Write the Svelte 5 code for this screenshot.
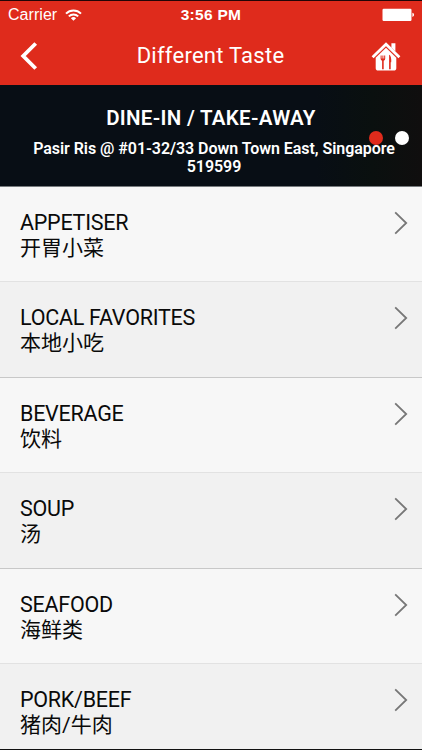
<script>
    const shop = {
        name: "Different Taste",
        service: "DINE-IN / TAKE-AWAY",
        address: "Pasir Ris @ #01-32/33 Down Town East, Singapore 519599",
    };

    const categories = [
        { name: "APPETISER", local: "开胃小菜" },
        { name: "LOCAL FAVORITES", local: "本地小吃" },
        { name: "BEVERAGE", local: "饮料" },
        { name: "SOUP", local: "汤" },
        { name: "SEAFOOD", local: "海鲜类" },
        { name: "PORK/BEEF", local: "猪肉/牛肉" },
    ];

    let page = $state(0);
</script>

<div class="screen">
    <header>
        <div class="status">
            <span class="carrier">
                <span>Carrier</span>
                <svg width="17" height="12" viewBox="0 0 17 12">
                    <g fill="none" stroke="#fff" stroke-width="2">
                        <path d="M1 4.6a10.6 10.6 0 0 1 15 0" />
                        <path d="M3.8 7.4a6.7 6.7 0 0 1 9.4 0" />
                    </g>
                    <path d="M8.5 11.8 5.9 9.2a3.7 3.7 0 0 1 5.2 0z" fill="#fff" />
                </svg>
            </span>
            <span class="time">3:56 PM</span>
            <svg class="battery" width="33" height="14" viewBox="0 0 33 14">
                <rect x="0.5" y="0.7" width="29" height="12.3" rx="1.2" fill="#fff" />
                <path d="M30.4 4.8c2.2.5 2.2 3.6 0 4.1z" fill="#fff" />
            </svg>
        </div>
        <nav>
            <button aria-label="Back">
                <svg width="18" height="28" viewBox="0 0 18 28">
                    <path d="M15.7 1.5 3.2 14l12.5 12.5" fill="none" stroke="#fff" stroke-width="3.8" />
                </svg>
            </button>
            <h1>{shop.name}</h1>
            <button aria-label="Home">
                <svg width="30" height="30" viewBox="0 0 30 30">
                    <path d="M20.4 6.5V2.2h4v8.2z" fill="#fff" />
                    <path d="M1.6 16.2 15 3.2l13.4 13" fill="none" stroke="#fff" stroke-width="2.8" />
                    <path d="M15 6.8 25.3 16.8V27q0 2.6-2.6 2.6H7.3Q4.7 29.6 4.7 27V16.8z" fill="#fff" />
                    <path
                        d="M9.6 14.5h1v3h.8v-3h1v3h.8v-3h1v3.3q0 1.5-1.5 1.9v8.5h-1.6v-8.5q-1.5-.4-1.5-1.9zM18.4 13.7q2.2 1.6 1.8 7.5h-.5v7h-1.6V14z"
                        fill="#df2b1c"
                    />
                </svg>
            </button>
        </nav>
    </header>

    <section class="banner">
        <h2>{shop.service}</h2>
        <p>{shop.address}</p>
        <div class="dots">
            {#each [0, 1] as dot}
                <button
                    class="dot"
                    class:active={page === dot}
                    aria-label="Page {dot + 1}"
                    onclick={() => (page = dot)}
                ></button>
            {/each}
        </div>
    </section>

    <ul>
        {#each categories as category}
            <li>
                <div>
                    <h3>{category.name}</h3>
                    <p>{category.local}</p>
                </div>
                <svg width="14" height="24" viewBox="0 0 14 24">
                    <path d="M1.2 1.3 12.2 12 1.2 22.7" fill="none" stroke="#777" stroke-width="1.8" />
                </svg>
            </li>
        {/each}
    </ul>
</div>

<style>
    :global(body) {
        margin: 0;
    }

    .screen {
        box-sizing: border-box;
        width: 422px;
        height: 750px;
        overflow: hidden;
        border-top: 1px solid #210506;
        border-bottom: 1px solid #111;
        background-color: #f1f1f1;
        font-family: Roboto, "Noto Sans CJK SC", sans-serif;
        display: flex;
        flex-direction: column;
    }

    h1,
    h2,
    h3,
    p,
    ul {
        margin: 0;
        padding: 0;
        font-weight: 400;
    }

    svg {
        display: block;
    }

    button {
        padding: 0;
        border: none;
        background: none;
    }

    header {
        flex: none;
        height: 84px;
        background-color: #df2b1c;
        color: #fff;
    }

    .status {
        height: 28px;
        padding: 0 8px;
        display: grid;
        grid-template-columns: 1fr auto 1fr;
        align-items: center;
        font-family: "Liberation Sans", Arial, sans-serif;
        font-size: 16px;
    }

    .carrier {
        display: flex;
        align-items: center;
        gap: 8px;
        letter-spacing: 0.05px;
    }

    .time {
        font-weight: 700;
        font-size: 15.5px;
        letter-spacing: 0.3px;
    }

    .battery {
        justify-self: end;
        margin-right: -1px;
    }

    nav {
        height: 54px;
        padding: 0 21px 0 20px;
        display: grid;
        grid-template-columns: 30px 1fr 30px;
        align-items: center;
    }

    h1 {
        font-size: 22px;
        line-height: 26px;
        letter-spacing: 0.25px;
        text-align: center;
    }

    .banner {
        position: relative;
        box-sizing: border-box;
        flex: none;
        height: 101.5px;
        padding: 20px 20px 0;
        border-bottom: 1px solid #777b7e;
        background: linear-gradient(90deg, #080e15 75%, #0a100f 88%, #100e0e);
        color: #fff;
        text-align: center;
    }

    h2 {
        font-size: 20.5px;
        line-height: 26px;
        font-weight: 600;
        letter-spacing: 0.3px;
    }

    .banner p {
        margin-top: 9px;
        padding-left: 6px;
        font-size: 16px;
        line-height: 18px;
        font-weight: 600;
        letter-spacing: -0.05px;
    }

    .dots {
        position: absolute;
        top: 46px;
        right: 13px;
        display: flex;
        gap: 12px;
    }

    .dot {
        width: 14px;
        height: 14px;
        border-radius: 50%;
        background-color: #fff;
    }

    .dot.active {
        background-color: #df2b1c;
    }

    ul {
        list-style: none;
    }

    li {
        box-sizing: border-box;
        height: 95.5px;
        padding: 23px 14.5px 0 20px;
        border-bottom: 1px solid #e2e2e2;
        background-color: #f7f7f7;
        display: flex;
        justify-content: space-between;
        align-items: flex-start;
    }

    li:nth-child(even) {
        border-bottom-color: #c8c8c8;
        background-color: #f1f1f1;
    }

    li svg {
        margin-top: 1px;
    }

    h3 {
        color: #0a0a0a;
        font-size: 21.5px;
        line-height: 25px;
        letter-spacing: -0.25px;
    }

    li p {
        color: #0a0a0a;
        font-size: 21px;
        line-height: 25px;
        margin-top: 1px;
        font-weight: 400;
    }
</style>
